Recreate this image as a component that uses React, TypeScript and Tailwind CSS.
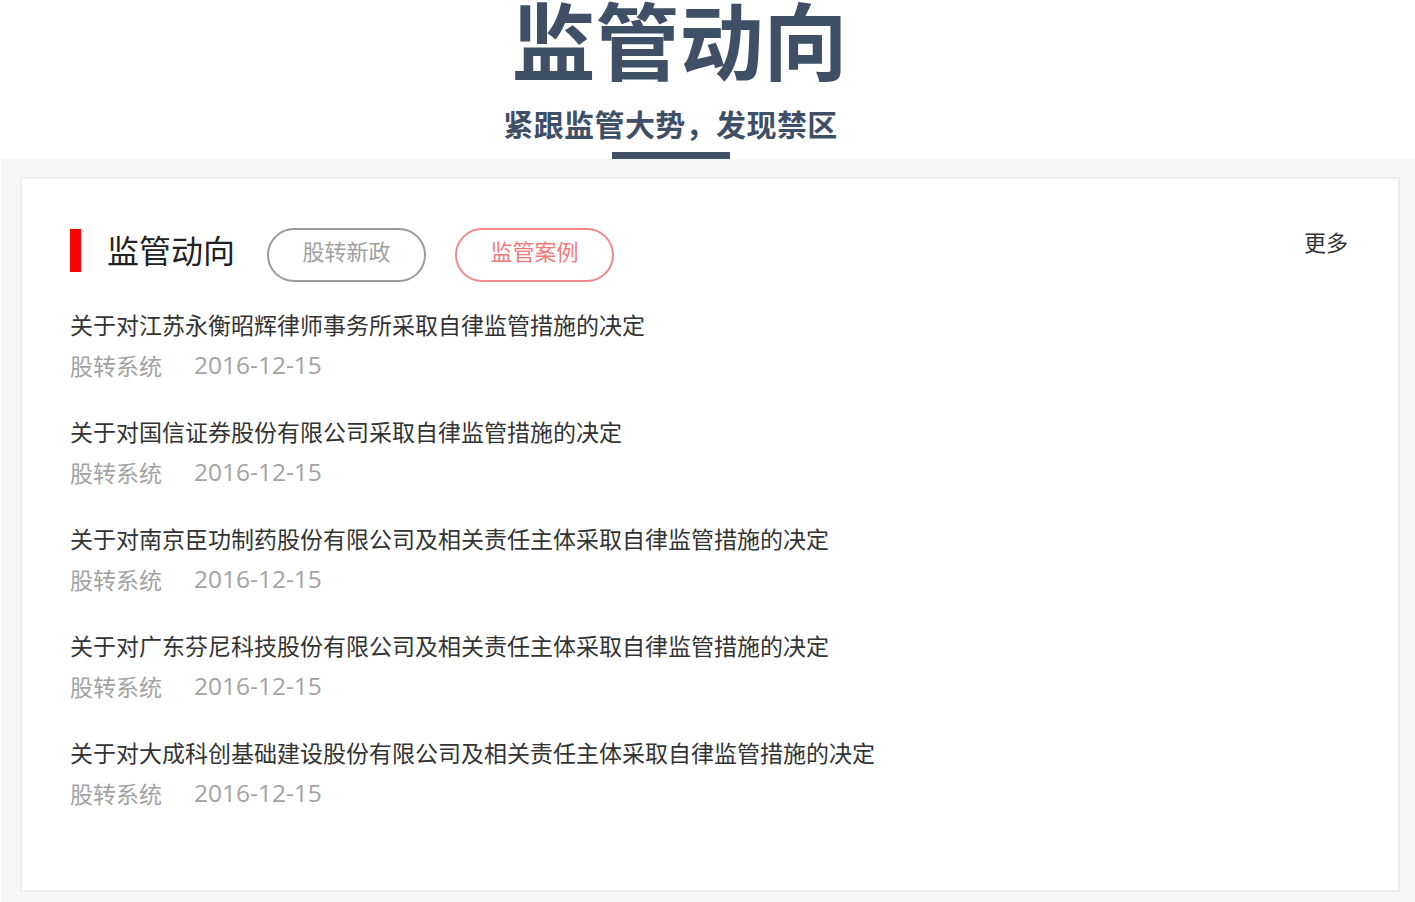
const items = [
  "关于对江苏永衡昭辉律师事务所采取自律监管措施的决定",
  "关于对国信证券股份有限公司采取自律监管措施的决定",
  "关于对南京臣功制药股份有限公司及相关责任主体采取自律监管措施的决定",
  "关于对广东芬尼科技股份有限公司及相关责任主体采取自律监管措施的决定",
  "关于对大成科创基础建设股份有限公司及相关责任主体采取自律监管措施的决定",
];

const cjk = { fontFamily: '"Microsoft YaHei", "Noto Sans CJK SC", sans-serif' };

export default function App() {
  return (
    <div className="min-h-[902px] bg-white" style={cjk}>
      <div className="flex h-[159px] flex-col items-center overflow-hidden pr-[74px]">
        <h1 className="ml-[18px] mt-[-4px] text-[84px] font-bold leading-none text-[#3f4f66]">监管动向</h1>
        <p className="mt-[28px] text-[30px] font-bold leading-none tracking-[0.4px] text-[#3f4f66]">紧跟监管大势，发现禁区</p>
        <div className="mt-auto h-[7px] w-[118px] bg-[#3f4f66]" />
      </div>
      <div className="ml-px bg-[#f7f7f7] pt-[18px] pb-[12px] pl-[19px] pr-[15px]">
        <div className="h-[715px] border-2 border-[#eeeeee] bg-white px-[48px] pt-[49px]">
          <div className="flex items-start">
            <div className="mt-px h-[43px] w-[11px] bg-[#ff0000]" />
            <h2 className="ml-[26px] mt-[1px] text-[32px] leading-[40px] text-[#222]">监管动向</h2>
            <button className="ml-[32px] h-[54px] w-[159px] rounded-full border-2 border-[#9a9a9a] pb-[9px] text-[22px] text-[#a0a0a0]">
              股转新政
            </button>
            <button className="ml-[29px] h-[54px] w-[159px] rounded-full border-2 border-[#f08a8a] pb-[9px] text-[22px] text-[#f07a7a]">
              监管案例
            </button>
            <a className="ml-auto mr-[2px] mt-[-1px] text-[22px] leading-[28px] text-[#333]">更多</a>
          </div>
          <ul className="mt-[24px]">
            {items.map((t) => (
              <li key={t} className="h-[107px]">
                <p className="text-[23px] leading-[36px] text-[#333]">{t}</p>
                <p className="mt-[5px] flex text-[23px] leading-[36px] text-[#a3a3a3]">
                  <span>股转系统</span>
                  <span className="ml-[32px] text-[24.5px]" style={{ fontFamily: '"Open Sans", "Liberation Sans", sans-serif' }}>
                    2016-12-15
                  </span>
                </p>
              </li>
            ))}
          </ul>
        </div>
      </div>
    </div>
  );
}
